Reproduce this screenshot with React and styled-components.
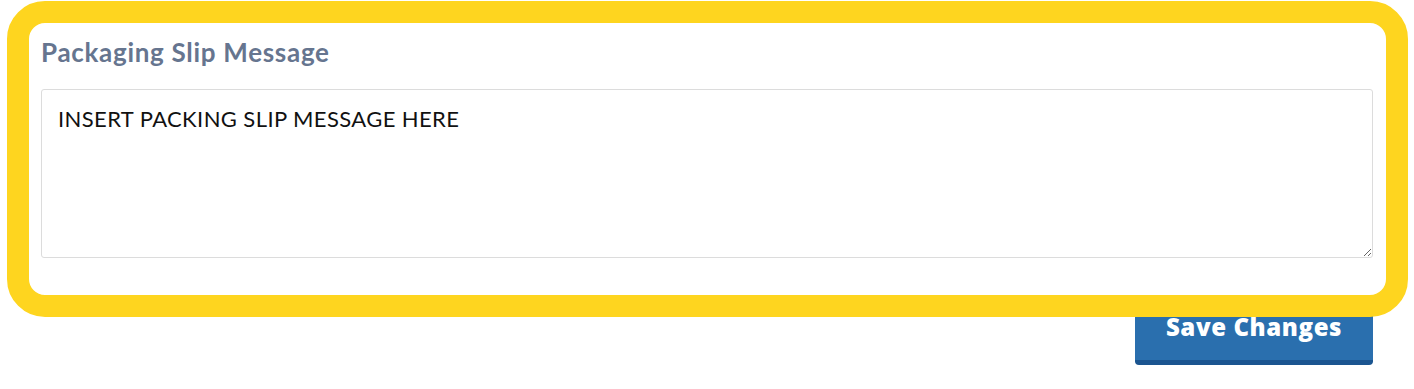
import React from "react";
import styled, { createGlobalStyle } from "styled-components";

const Global = createGlobalStyle`
  html, body { margin: 0; padding: 0; background: #fff; }
  body { font-family: Lato, "Open Sans", sans-serif; }
`;

const Page = styled.div`
  position: relative;
  width: 1414px;
  height: 389px;
  overflow: hidden;
  background: #fff;
`;

const Panel = styled.section`
  display: flex;
  flex-direction: column;
  padding: 36px 41px 0 41px;
  gap: 21px;
`;

const Title = styled.h2`
  margin: 0;
  font-family: Lato, sans-serif;
  font-size: 26px;
  font-weight: 700;
  letter-spacing: 0.7px;
  line-height: 32px;
  color: #66758f;
`;

const MessageBox = styled.textarea`
  box-sizing: border-box;
  width: 1332px;
  height: 169px;
  margin: 0;
  padding: 14px 16px;
  border: 1px solid #dcdcdc;
  border-radius: 3px;
  font-family: Lato, sans-serif;
  font-size: 22px;
  letter-spacing: 0.4px;
  line-height: 30px;
  color: #111;
  resize: vertical;
  outline: none;
`;

const Actions = styled.div`
  display: flex;
  justify-content: flex-end;
  padding: 37px 41px 0 0;
`;

const SaveButton = styled.button`
  box-sizing: border-box;
  width: 238px;
  height: 70px;
  border: none;
  border-bottom: 5px solid #1b5590;
  border-radius: 4px;
  background: #2a6fae;
  color: #fff;
  font-family: "Open Sans", sans-serif;
  font-weight: 800;
  font-size: 24px;
  letter-spacing: 0.6px;
  padding: 0 0 3px 0;
  cursor: pointer;
`;

const Highlight = styled.div`
  position: absolute;
  left: 7px;
  top: 1px;
  width: 1401px;
  height: 316px;
  box-sizing: border-box;
  border: 22px solid #fed51f;
  border-radius: 38px;
  pointer-events: none;
  z-index: 2;
`;

export default function App() {
  return (
    <>
      <Global />
      <Page>
        <Panel>
          <Title>Packaging Slip Message</Title>
          <MessageBox defaultValue="INSERT PACKING SLIP MESSAGE HERE" />
        </Panel>
        <Actions>
          <SaveButton>Save Changes</SaveButton>
        </Actions>
        <Highlight />
      </Page>
    </>
  );
}
